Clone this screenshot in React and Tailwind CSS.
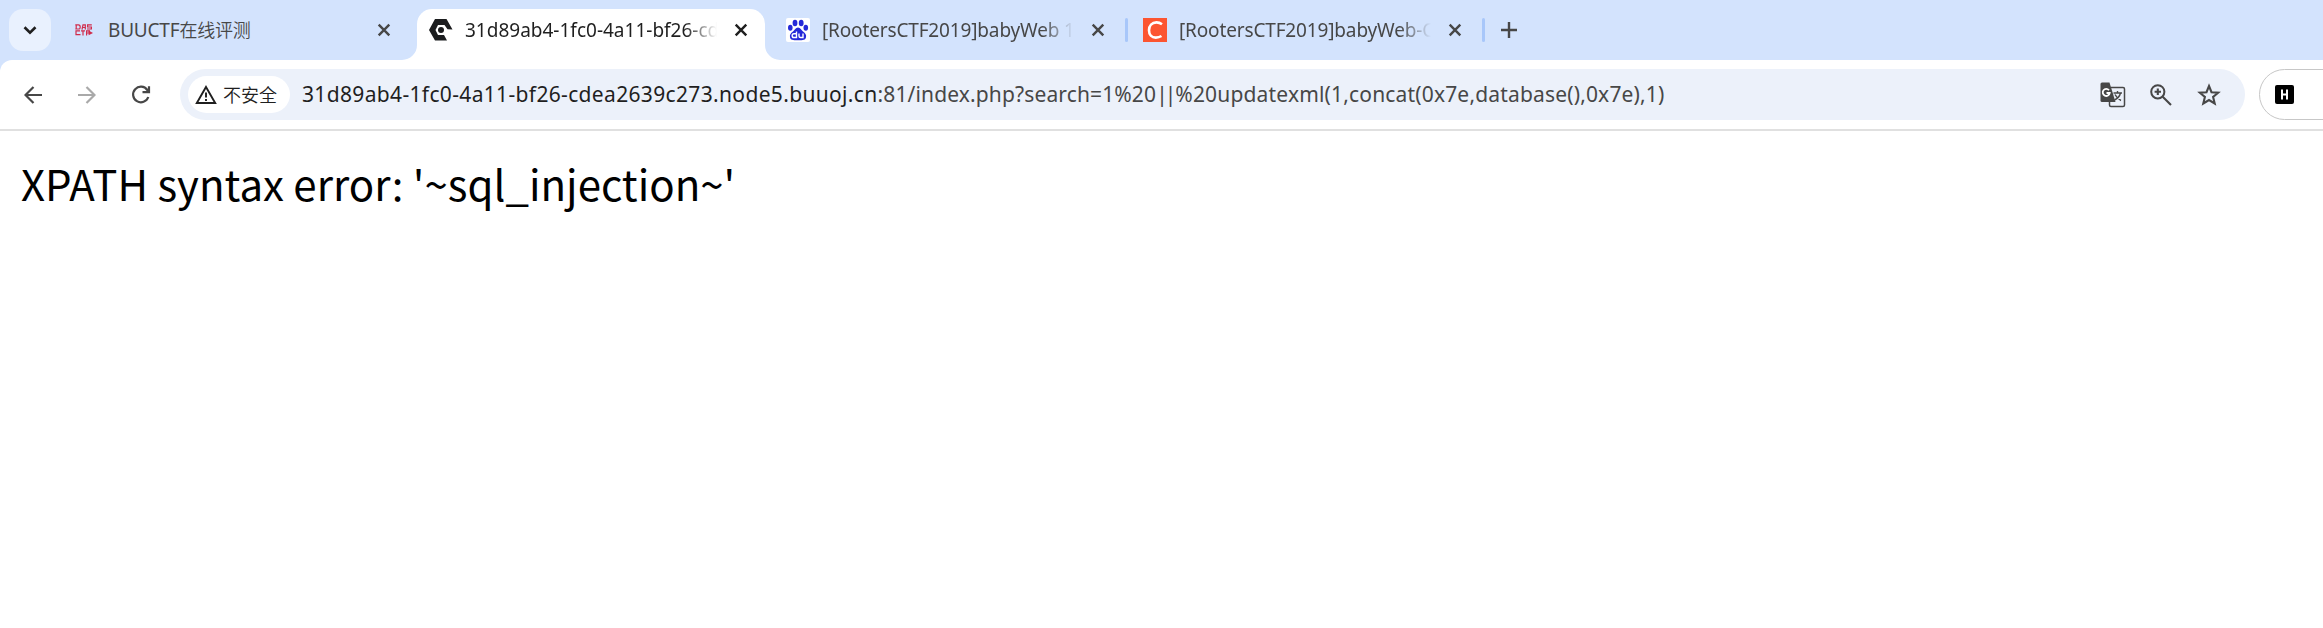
import React from "react";

const UI = "font-['Noto_Sans','Noto_Sans_CJK_SC',sans-serif]";

function Icon({ size = 24, className = "", children, viewBox = "0 0 24 24" }) {
  return (
    <svg width={size} height={size} viewBox={viewBox} fill="none" stroke="currentColor" className={"shrink-0 " + className}>
      {children}
    </svg>
  );
}

function Close() {
  return (
    <Icon size={14} viewBox="0 0 14 14">
      <path d="M1.7 1.7l10.6 10.6M12.3 1.7L1.7 12.3" strokeWidth="2.4" />
    </Icon>
  );
}

function Foot({ flip = false }) {
  return (
    <svg width="15" height="15" viewBox="0 0 15 15" className={"shrink-0 self-end " + (flip ? "-scale-x-100" : "")}>
      <path d="M15 0V15H0A15 15 0 0 0 15 0Z" fill="white" />
    </svg>
  );
}

function DasIcon() {
  return (
    <svg width="18" height="12" viewBox="0 0 18 12" fill="none" stroke="#d02c4c" strokeWidth="1.2" className="shrink-0">
      <path d="M1.2 .3V5.2M.3 .9H3.5Q5.2 .9 5.2 3T3.5 5H.3M7 5.6L8 .9H10.3V5.6M7.5 3.5H10.3M16.8 .9H12.6V3H16.4V5H12M5 6.9H1V10.6H5.5M6 6.9H10M8 6.9V11.6M11.6 11.6V6.9H14.4V9H11.6" />
      <path d="M13.6 6.4L18 8.9L13.6 11.2Z" fill="#d02c4c" stroke="none" />
    </svg>
  );
}

function HexIcon() {
  return (
    <svg width="24" height="22" viewBox="0 0 24 22" className="shrink-0">
      <path fill="#1b1c1e" d="M6 0H17.5L23.5 10.5L18.5 10.2L15.5 6H9L6.5 11L9 16H15L18 21.5H6L0 11Z" />
      <circle cx="12" cy="11" r="3" fill="#1b1c1e" />
    </svg>
  );
}

function BaiduIcon() {
  return (
    <svg width="24" height="24" viewBox="0 0 24 24" className="shrink-0">
      <rect width="24" height="24" rx="2" fill="white" />
      <g fill="#2529d8">
        <ellipse cx="9" cy="5" rx="2.4" ry="3.3" />
        <ellipse cx="15.2" cy="5" rx="2.4" ry="3.3" />
        <ellipse cx="4.3" cy="9.8" rx="2.3" ry="3" />
        <ellipse cx="19.8" cy="9.8" rx="2.3" ry="3" />
        <path d="M12 9.6C14.5 9.6 15.2 12 17 13.6C19.5 15.5 20.5 17 20 19.2C19.3 22 17.5 22.2 12 22.2S4.7 22 4 19.2C3.5 17 4.5 15.5 7 13.6C8.8 12 9.5 9.6 12 9.6Z" />
      </g>
      <path d="M10.5 13.5V19.5H8A1.8 1.8 0 0 1 8 15.8H10.5M13 15.5V18Q13 19.5 14.5 19.5H17V15.5" fill="none" stroke="white" strokeWidth="1.4" />
    </svg>
  );
}

function CIcon() {
  return (
    <svg width="24" height="24" viewBox="0 0 24 24" className="shrink-0">
      <rect width="24" height="24" fill="#fc5531" />
      <path d="M19 6.2Q16.5 4.4 13.5 4.4C9 4.4 6 7.6 6 12.2C6 16.8 8.7 19.6 12.8 19.6Q16 19.6 18.5 18" fill="none" stroke="white" strokeWidth="2.6" />
    </svg>
  );
}

function Title({ children, fade = "", className }) {
  return (
    <div className={"whitespace-nowrap text-[19px] leading-[28px] " + fade + " " + className}>
      {children}
    </div>
  );
}

const FADE = "[mask-image:linear-gradient(to_right,black_calc(100%-32px),transparent)]";

export default function App() {
  return (
    <div className={"flex h-[628px] w-full flex-col overflow-hidden bg-white text-[#474747] " + UI}>
      <header className="flex h-[60px] shrink-0 bg-[#d3e3fd]">
        <button className="mt-[9px] ml-[9px] flex size-[42px] shrink-0 items-center justify-center rounded-[14px] bg-[#e9f1fe] text-[#1f1f1f]">
          <Icon size={14} viewBox="0 0 14 14"><path d="M1.5 4.2L7 9.6L12.5 4.2" strokeWidth="2.6" /></Icon>
        </button>
        <div className="flex h-[60px] w-[351px] shrink-0 items-center pl-[24px]">
          <DasIcon />
          <Title className="ml-[15px] w-[255px] tracking-[-0.2px]">BUUCTF<span className="text-[18px] font-[350]">在线评测</span></Title>
          <span className="ml-[14px]"><Close /></span>
        </div>
        <div className="flex shrink-0">
          <Foot />
          <div className="mt-[9px] flex h-[51px] w-[348px] items-center rounded-t-[15px] bg-white pb-[9px] pl-[12px] text-[#1f1f1f]">
            <HexIcon />
            <Title className="ml-[12px] w-[252px]" fade={FADE}>31d89ab4-1fc0-4a11-bf26-cd</Title>
            <span className="ml-[17px]"><Close /></span>
          </div>
          <Foot flip />
        </div>
        <div className="flex h-[60px] w-[345px] shrink-0 items-center pl-[6px]">
          <BaiduIcon />
          <Title className="ml-[12px] w-[252px] tracking-[-0.15px]" fade={FADE}>[RootersCTF2019]babyWeb 1</Title>
          <span className="ml-[17px]"><Close /></span>
        </div>
        <div className="mt-[18px] h-[24px] w-[3px] shrink-0 rounded-full bg-[#a8c7fa]" />
        <div className="flex h-[60px] w-[354px] shrink-0 items-center pl-[15px]">
          <CIcon />
          <Title className="ml-[12px] w-[252px] tracking-[-0.15px]" fade={FADE}>[RootersCTF2019]babyWeb-C</Title>
          <span className="ml-[17px]"><Close /></span>
        </div>
        <div className="mt-[18px] h-[24px] w-[3px] shrink-0 rounded-full bg-[#a8c7fa]" />
        <div className="flex items-center pl-[16px]">
          <Icon size={16} viewBox="0 0 16 16"><path d="M8 0V16M0 8H16" strokeWidth="2.4" /></Icon>
        </div>
      </header>

      <div className="bg-[#d3e3fd]">
        <nav className="flex h-[71px] shrink-0 items-start rounded-tl-[12px] border-b-2 border-[#e0e0e0] bg-white pt-[9px]">
          <div className="flex h-[51px] w-[180px] shrink-0 items-center pl-[24px]">
            <Icon size={18} viewBox="0 0 18 18"><path d="M18 9H1.5M9.5 1L1.5 9L9.5 17" strokeWidth="2.2" /></Icon>
            <Icon size={18} viewBox="0 0 18 18" className="ml-[36px] text-[#a9a9a9]"><path d="M0 9H16.5M8.5 1L16.5 9L8.5 17" strokeWidth="2.2" /></Icon>
            <Icon size={20} viewBox="0 0 20 20" className="ml-[35px]"><path d="M17.3 12A7.8 7.8 0 1 1 16.3 5L17.6 6.8M18 1.2V7.2H11.5" strokeWidth="2.2" /></Icon>
          </div>
          <div className="flex h-[51px] w-[2065px] shrink-0 items-center rounded-full bg-[#ecf1fa] pl-[8px]">
            <div className="flex h-[37px] w-[102px] shrink-0 items-center rounded-full bg-white pl-[7px] text-[#1f1f1f]">
              <Icon size={22} viewBox="0 0 22 20"><path d="M11 2L20.2 18H1.8Z" strokeWidth="1.9" /><path d="M11 7.5V12.5M11 14V16" strokeWidth="1.9" /></Icon>
              <span className="ml-[6px] whitespace-nowrap text-[18px] leading-[28px] font-[350]">不安全</span>
            </div>
            <div className="ml-[12px] w-[1798px] whitespace-nowrap pb-[1px] text-[21px] leading-[30px]">
              <span className="tracking-[0.34px] text-[#1f1f1f]">31d89ab4-1fc0-4a11-bf26-cdea2639c273.node5.buuoj.cn</span>
              <span className="tracking-[0.13px]">:81/index.php?search=1%20<span className="tracking-[-3px]">||</span><span className="ml-[2px] tracking-[0.17px]">%20updatexml(1,concat(0x7e,database(),0x7e),1)</span></span>
            </div>
            <svg width="26" height="26" viewBox="0 0 26 26" className="shrink-0">
              <rect x="9.5" y="5.5" width="15" height="19" rx="1.5" fill="none" stroke="#474747" strokeWidth="1.5" />
              <path d="M2 .5H9.5L15.5 20H2Q.5 20 .5 18.5V2Q.5 .5 2 .5Z" fill="#474747" />
              <path d="M9 8.3A3.5 3.5 0 1 0 9.7 11H6.5" fill="none" stroke="white" strokeWidth="1.8" />
              <path d="M13.5 11H22M17.5 9V11M20.5 11Q19.5 15.5 14.5 18M15 12.5Q17 16.5 21 18.5" fill="none" stroke="#474747" strokeWidth="1.4" />
            </svg>
            <Icon size={22} viewBox="0 0 22 22" className="ml-[24px]"><circle cx="7.8" cy="7.8" r="6.6" strokeWidth="2" /><path d="M12.7 12.7L21 21M7.8 4.6V11M4.6 7.8H11" strokeWidth="2.1" /></Icon>
            <Icon size={24} viewBox="0 0 24 24" className="ml-[25px]"><path d="M12 3L14.5 9.2L21.2 9.7L16.1 14L17.7 20.5L12 17L6.3 20.5L7.9 14L2.8 9.7L9.5 9.2Z" strokeWidth="2.1" /></Icon>
          </div>
          <div className="ml-[14px] flex h-[51px] w-[120px] shrink-0 items-center rounded-l-full border border-[#c7c7c7] pl-[15px]">
            <svg width="19" height="19" viewBox="0 0 19 19"><rect width="19" height="19" rx="2" fill="black" /><path d="M7 4.5V14.5M12 4.5V14.5M7 9.5H12" stroke="white" strokeWidth="2" /></svg>
          </div>
        </nav>
      </div>

      <main className="px-[21px] pt-[22px] font-['Noto_Sans_CJK_SC',sans-serif] text-[42px] leading-[60px] text-black">
        XPATH syntax error: '~sql_injection~'
      </main>
    </div>
  );
}
